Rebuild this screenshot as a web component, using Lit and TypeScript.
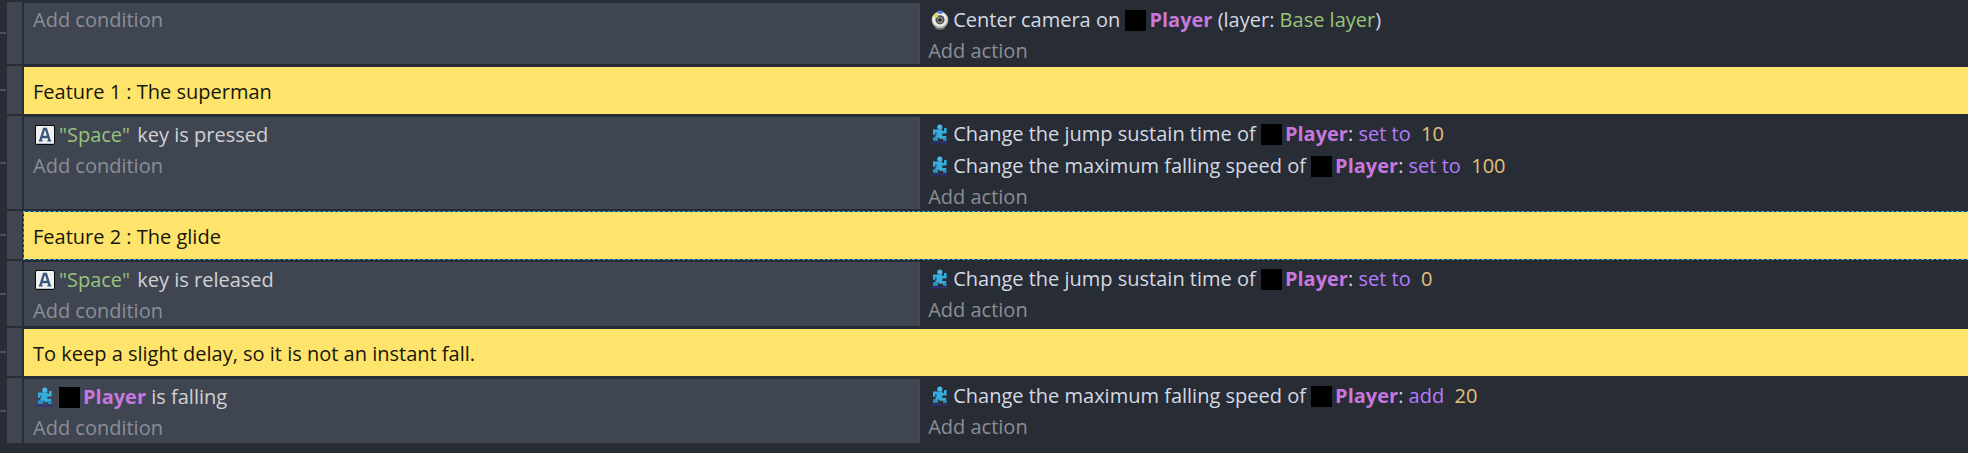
import { LitElement, html, svg, css, TemplateResult } from "lit";
import { customElement, property } from "lit/decorators.js";

type Token = { kind: "text" | "object" | "string" | "operator" | "number"; value: string };
type Instruction = { icon: "camera" | "key" | "platformer"; tokens: Token[] };
type EventRow =
  | { type: "comment"; text: string; selected?: boolean }
  | { type: "event"; conditions: Instruction[]; actions: Instruction[] };

const text = (value: string): Token => ({ kind: "text", value });
const object = (value: string): Token => ({ kind: "object", value });
const string = (value: string): Token => ({ kind: "string", value });
const operator = (value: string): Token => ({ kind: "operator", value });
const number = (value: string): Token => ({ kind: "number", value });

const changeProperty = (label: string, op: string, value: string): Instruction => ({
  icon: "platformer",
  tokens: [text(`Change the ${label} of `), object("Player"), text(": "), operator(op), text("  "), number(value)],
});

const EVENTS: EventRow[] = [
  {
    type: "event",
    conditions: [],
    actions: [
      {
        icon: "camera",
        tokens: [text("Center camera on "), object("Player"), text(" (layer: "), string("Base layer"), text(")")],
      },
    ],
  },
  { type: "comment", text: "Feature 1 : The superman" },
  {
    type: "event",
    conditions: [{ icon: "key", tokens: [string('"Space"'), text(" key is pressed")] }],
    actions: [
      changeProperty("jump sustain time", "set to", "10"),
      changeProperty("maximum falling speed", "set to", "100"),
    ],
  },
  { type: "comment", text: "Feature 2 : The glide", selected: true },
  {
    type: "event",
    conditions: [{ icon: "key", tokens: [string('"Space"'), text(" key is released")] }],
    actions: [changeProperty("jump sustain time", "set to", "0")],
  },
  { type: "comment", text: "To keep a slight delay, so it is not an instant fall." },
  {
    type: "event",
    conditions: [{ icon: "platformer", tokens: [object("Player"), text(" is falling")] }],
    actions: [changeProperty("maximum falling speed", "add", "20")],
  },
];

const ICONS: Record<Instruction["icon"], TemplateResult> = {
  camera: svg`
    <ellipse cx="10" cy="18" rx="5" ry="1.800" fill="#696a6c"/>
    <circle cx="10" cy="10" r="8.400" fill="#b4b4b2"/>
    <circle cx="9.800" cy="9.400" r="7.200" fill="#efefeb"/>
    <circle cx="10" cy="9.800" r="4.600" fill="#4b4d4c"/>
    <circle cx="10" cy="9.800" r="3" fill="#85888a"/>
    <circle cx="10" cy="10" r="1.600" fill="#17191b"/>
    <path d="M8 12.400h4" stroke="#a5a24e"/>
    <rect x="7.400" y="0.600" width="5.200" height="3.200" rx="1" fill="#4d7fd0"/>
    <circle cx="6.200" cy="5.800" r="2.100" fill="#dcd93c"/>`,
  key: svg`
    <rect x="0.500" y="0.500" width="19" height="19" rx="1.500" fill="#f0f0ef" stroke="#08090b"/>
    <path d="M1.500 18.500h17" stroke="#b9bbbd"/>
    <path d="M5.400 15.500 9 4h2l3.600 11.500M6.800 12h6.400" fill="none" stroke="#3a587d" stroke-width="2.400"/>
    <path d="M3.800 15.700h3.800M12.400 15.700h3.800" stroke="#3a587d" stroke-width="1.400"/>`,
  platformer: svg`
    <circle cx="9.800" cy="3" r="2.600" fill="#4bb8ea"/>
    <path d="M3 5.500h9.500v1.500h1.500V4h2.600v5.400h-4.300v2.600h3.900V17h-2.800v-2.200H9V13.400H7.800V16.600H3V13.600h2.400v-2.400h1V8.200H5.400v2.600H3Z" fill="#35addf"/>
    <path d="M3 13.600h4.800v3H3ZM13.600 14h2.800v3h-2.800Z" fill="#2592cb"/>
    <path d="M1 18.600h17" stroke="#2a3382" stroke-width="1.600"/>`,
};

@customElement("instruction-line")
class InstructionLine extends LitElement {
  @property({ attribute: false }) instruction!: Instruction;

  static styles = css`
    :host {
      display: block;
      height: 30px;
      padding-top: 2px;
      line-height: 30px;
      white-space: pre;
    }
    .line {
      display: flex;
      align-items: center;
    }
    .icon {
      flex: none;
      width: 20px;
      height: 20px;
      margin: 0 3px 0 2px;
    }
    .object {
      display: inline-flex;
      align-items: center;
      gap: 3px;
      color: #c678dd;
      font-weight: 700;
    }
    .thumb {
      width: 21px;
      height: 21px;
      background: #000;
    }
    .string {
      color: #98c379;
    }
    .icon + .string {
      margin: 0 2px 0 1px;
    }
    .icon + .object {
      margin-left: 1px;
    }
    .operator {
      color: #b57bff;
    }
    .number {
      color: #e5c07b;
    }
  `;

  render() {
    const { icon, tokens } = this.instruction;
    return html`<div class="line"><svg class="icon" viewBox="0 0 20 20" aria-hidden="true">${ICONS[icon]}</svg>${tokens.map(
      (t) => html`<span class=${t.kind}>${t.kind === "object" ? html`<span class="thumb"></span>` : ""}${t.value}</span>`
    )}</div>`;
  }
}

@customElement("app-root")
class AppRoot extends LitElement {
  static styles = css`
    :host {
      display: block;
      min-height: 100vh;
      background: #282c34;
      color: #d4d9e4;
      font: 20px "Open Sans", "Noto Sans", sans-serif;
    }
    .sheet {
      display: flex;
      flex-direction: column;
      gap: 2px;
      margin: 0;
      padding: 2px 0 0;
      list-style: none;
    }
    .row {
      display: grid;
      grid-template-columns: 6px 15px minmax(0, 1fr);
    }
    .branch {
      align-self: center;
      height: 2px;
      background: #4d515a;
    }
    .handle {
      margin-left: 1px;
      margin-right: -1px;
      background: #404552;
    }
    .body {
      margin: 1px 0 0 3px;
    }
    .event {
      display: grid;
      grid-template-columns: 461fr 539fr;
      min-height: 61px;
    }
    .conditions {
      box-sizing: border-box;
      padding: 1px 8px 3px 9px;
      background: #404552;
      color: #d0d1d3;
      border-right: 1px solid #4a4b50;
    }
    .actions {
      padding: 0 8px;
    }
    .add {
      display: block;
      height: 28px;
      padding: 4px 0 0;
      border: 0;
      background: none;
      color: #8b8e96;
      font: inherit;
      line-height: 24px;
      cursor: pointer;
    }
    .comment {
      padding: 11px 9px 9px;
      background: #ffe46b;
      color: #16160c;
      line-height: 27px;
    }
    .selected {
      outline: 1px dashed #3ba3e8;
    }
  `;

  private renderBody(row: EventRow) {
    if (row.type === "comment") {
      return html`<div class="body comment ${row.selected ? "selected" : ""}">${row.text}</div>`;
    }
    const lines = (list: Instruction[]) =>
      list.map((i) => html`<instruction-line .instruction=${i}></instruction-line>`);
    return html`<div class="body event">
      <div class="conditions">${lines(row.conditions)}<button class="add">Add condition</button></div>
      <div class="actions">${lines(row.actions)}<button class="add">Add action</button></div>
    </div>`;
  }

  render() {
    return html`<ul class="sheet">
      ${EVENTS.map(
        (row) => html`<li class="row">
          <span class="branch"></span><span class="handle"></span>${this.renderBody(row)}
        </li>`
      )}
    </ul>`;
  }
}
